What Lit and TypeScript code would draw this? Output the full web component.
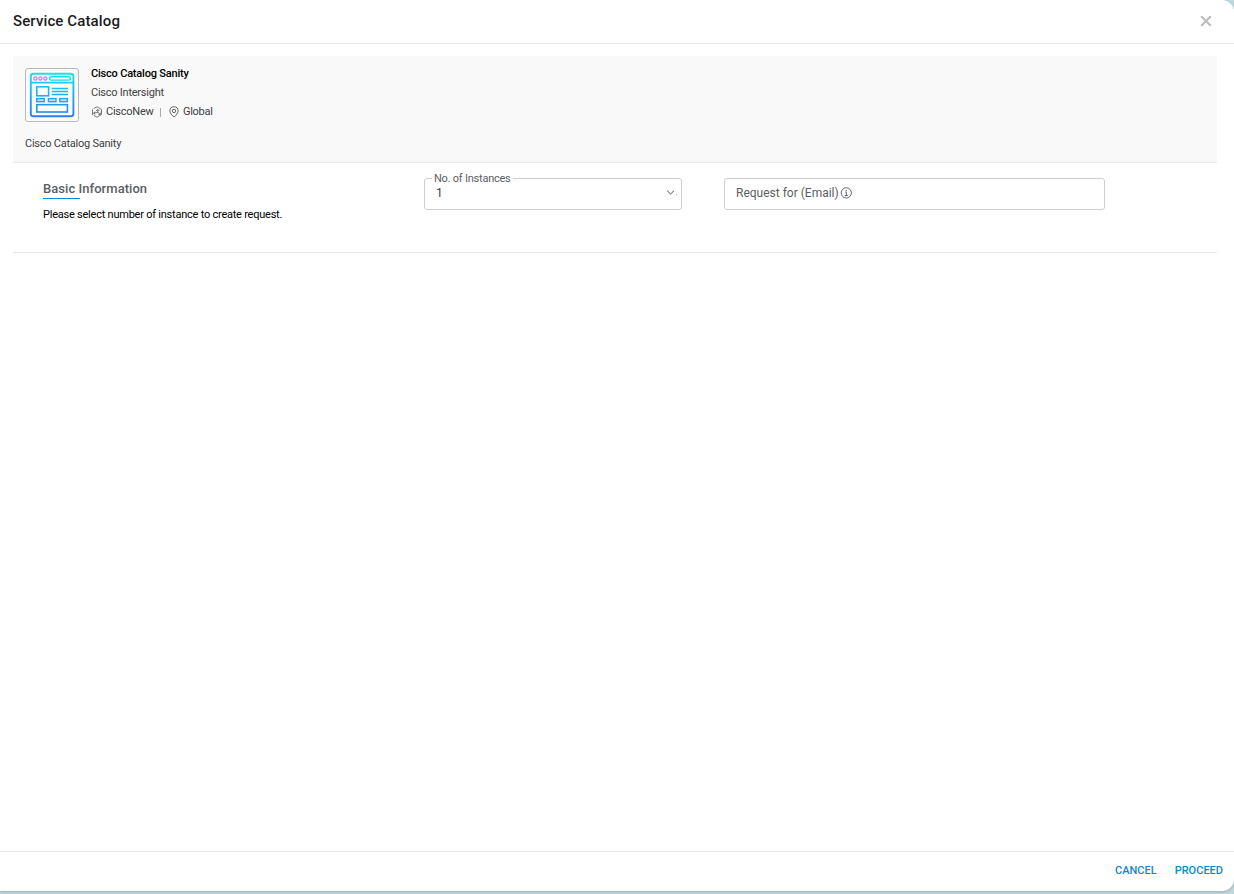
import { LitElement, html, css } from "lit";
import { customElement } from "lit/decorators.js";

@customElement("catalog-summary")
class CatalogSummary extends LitElement {
  static styles = css`
    :host { display: block; box-sizing: border-box; height: 107px; padding: 12px 12px 0; background: #f9f9f9; border-bottom: 1px solid #e9e9e9; color: #3f4144; font-size: 11px; letter-spacing: -.24px; }
    .top { display: flex; gap: 12px; height: 54px; }
    .logo { box-sizing: border-box; width: 54px; height: 54px; border: 1px solid #b9b9b9; border-radius: 3px; background: #fcfcfc; }
    .logo svg { display: block; }
    .info { display: flex; flex-direction: column; margin-top: -4px; }
    .row { height: 19px; line-height: 19px; display: flex; align-items: center; white-space: nowrap; }
    .name { color: #000; font-weight: 500; letter-spacing: -.2px; }
    .meta svg { flex: none; margin-right: 3px; }
    .bar { width: 1px; height: 9px; background: #aaa; margin: 1px 7.3px 0 6px; }
    .desc { margin-top: 15px; line-height: 14px; }
  `;
  render() {
    return html`
      <div class="top">
        <div class="logo">
          <svg width="52" height="52" viewBox="26 69 52 52" fill="none" stroke="url(#g)" stroke-width="1.6">
            <defs>
              <linearGradient id="g" gradientUnits="userSpaceOnUse" x1="0" y1="73" x2="0" y2="117">
                <stop offset="0" stop-color="#19e3ea" />
                <stop offset="1" stop-color="#2b7cf2" />
              </linearGradient>
            </defs>
            <rect x="30.8" y="73.8" width="42.6" height="42.4" rx="2.5" stroke-width="1.9" />
            <path d="M31 82.6h42.2" />
            <g stroke="#c77cf0" stroke-width="1.3">
              <circle cx="35.4" cy="78.4" r="1.6" /><circle cx="40.4" cy="78.4" r="1.6" /><circle cx="45.4" cy="78.4" r="1.6" />
            </g>
            <rect x="49.6" y="76.7" width="20.8" height="3.4" rx="1.7" stroke-width="1.4" />
            <rect x="36.8" y="86.8" width="11.8" height="9" />
            <path d="M51.7 88.5h16.3M51.7 91.5h16.3M51.7 94.5h16.3" stroke-width="1.5" />
            <g stroke-width="1.4">
              <rect x="36.7" y="98.6" width="7.6" height="3.1" fill="#2ba0f0" fill-opacity=".3" /><rect x="48.4" y="98.6" width="7.6" height="3.1" fill="#2ba0f0" fill-opacity=".3" /><rect x="59.8" y="98.6" width="7.6" height="3.1" fill="#2ba0f0" fill-opacity=".3" />
            </g>
            <rect x="36.8" y="104.7" width="30.6" height="7.3" />
          </svg>
        </div>
        <div class="info">
          <div class="row name">Cisco Catalog Sanity</div>
          <div class="row">Cisco Intersight</div>
          <div class="row meta">
            <svg width="12" height="12" viewBox="0 0 12 12" fill="none" stroke="#55585b" stroke-width=".8">
              <path d="M2.7 2.5 6 .8l4.5 2.6v5.2L6 11.2 2.9 9.5M1.5 8.6V3.4M1.5 8.6l.9.6" />
              <path d="M6.8 3.4v3L2.6 7.2M6.8 6.4l2.4 1.8M4.8 5.1l2-1.7 1.4 1.6M4 5.8 2.5 7.2 4.3 8.3M9.3 6.6v1.7l-1.9.3" />
            </svg>
            <span>CiscoNew</span><span class="bar"></span>
            <svg width="12" height="12" viewBox="0 0 12 12" fill="none" stroke="#55585b" stroke-width=".9">
              <path d="M6 11.1C3.6 8.9 1.9 7 1.9 4.9a4.1 4.1 0 0 1 8.2 0C10.1 7 8.4 8.9 6 11.1Z" />
              <circle cx="6" cy="5" r="1.7" />
            </svg>
            <span>Global</span>
          </div>
        </div>
      </div>
      <div class="desc">Cisco Catalog Sanity</div>
    `;
  }
}

@customElement("request-form")
class RequestForm extends LitElement {
  static styles = css`
    :host { box-sizing: border-box; display: grid; grid-template-columns: 381px 258px 381px; height: 90px; padding: 15px 0 0 30px; border-bottom: 1px solid #e9e9e9; align-items: start; }
    .heading { width: max-content; height: 19px; color: #5b5e62; font-size: 13px; font-weight: 500; line-height: 20px; margin-top: 1px; letter-spacing: .05px; }
    .rule { width: 37px; height: 1px; background: #0e86d4; }
    .hint { margin-top: 9px; font-size: 11px; line-height: 14px; color: #000; letter-spacing: -.23px; }
    .field { box-sizing: border-box; height: 32px; border: 1px solid #cdcfd8; border-radius: 3px; display: flex; align-items: center; padding: 0 4px 2px 11px; font-size: 12px; color: #5b5e62; position: relative; }
    .email { margin-left: 42px; width: 381px; }
    .label { position: absolute; left: 7px; top: -7px; padding: 0 2px; background: #fff; font-size: 11px; line-height: 14px; white-space: nowrap; letter-spacing: -.23px; }
    .value { flex: 1; color: #3a3c40; }
    .email svg { margin-left: 1.6px; }
  `;
  render() {
    return html`
      <div>
        <div class="heading">Basic Information</div>
        <div class="rule"></div>
        <div class="hint">Please select number of instance to create request.</div>
      </div>
      <div class="field">
        <span class="label">No. of Instances</span>
        <span class="value">1</span>
        <svg width="12" height="8" viewBox="0 0 12 8" fill="none" stroke="#4a4d52">
          <path d="m2.2 1.7 3.4 3.3L9 1.7" /><path d="M11.5 5v1" stroke="#aaa" stroke-width=".8" />
        </svg>
      </div>
      <div class="field email">
        <span>Request for (Email)</span>
        <svg width="12" height="12" viewBox="0 0 12 12" fill="none" stroke="#55585b" stroke-width=".9">
          <circle cx="6.3" cy="5.9" r="5.1" /><path d="M5.2 5.1h1.2v3.3M4.8 8.5h3.1" /><circle cx="6.3" cy="3.3" r=".65" fill="#55585b" stroke="none" />
        </svg>
      </div>
    `;
  }
}

@customElement("app-root")
class AppRoot extends LitElement {
  static styles = css`
    :host { display: block; height: 894px; overflow: hidden; background: #bfd6da; font-family: Roboto, sans-serif; }
    .dialog { box-sizing: border-box; height: 891px; display: flex; flex-direction: column; background: #fff; border-radius: 0 12px 12px 0; box-shadow: 0 1px 3px rgba(60, 100, 110, .3); }
    .head { box-sizing: border-box; height: 44px; flex: none; display: flex; align-items: center; justify-content: space-between; padding: 0 22px 2px 13px; border-bottom: 1px solid #e8e8e8; }
    .title { font-size: 15px; font-weight: 500; color: #1c1c1e; letter-spacing: .12px; }
    .body { flex: 1; padding: 12px 17px 0 13px; }
    .foot { box-sizing: border-box; height: 40px; flex: none; display: flex; align-items: center; justify-content: flex-end; gap: 18px; padding: 0 11px 2px; border-top: 1px solid #e8e8e8; }
    .action { font-size: 11px; font-weight: 500; color: #0e86d4; }
  `;
  render() {
    return html`
      <div class="dialog">
        <div class="head">
          <div class="title">Service Catalog</div>
          <svg width="12" height="12" viewBox="0 0 12 12" stroke="#bdbdbd" stroke-width="2.2"><path d="m1.2 1.2 9.6 9.6M10.8 1.2 1.2 10.8" /></svg>
        </div>
        <div class="body">
          <catalog-summary></catalog-summary>
          <request-form></request-form>
        </div>
        <div class="foot">
          <span class="action">CANCEL</span>
          <span class="action">PROCEED</span>
        </div>
      </div>
    `;
  }
}
